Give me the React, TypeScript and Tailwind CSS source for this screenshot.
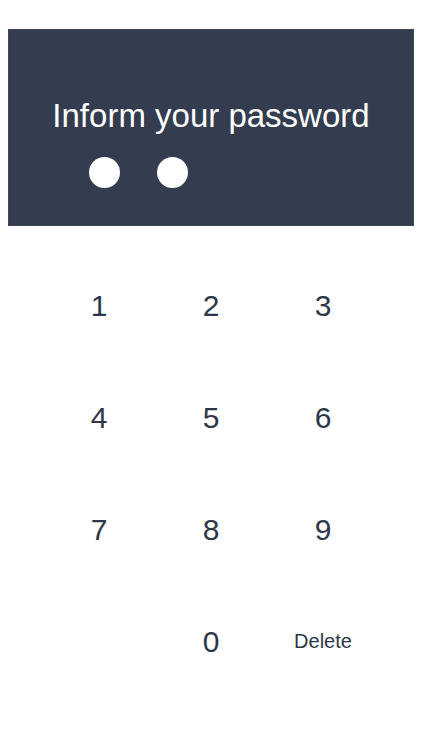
import { useState } from "react";

const keys = ["1", "2", "3", "4", "5", "6", "7", "8", "9", "", "0", "Delete"];

export default function App() {
  const [code, setCode] = useState("12");

  const press = (k: string) => {
    if (!k) return;
    if (k === "Delete") setCode((c) => c.slice(0, -1));
    else setCode((c) => (c.length < 4 ? c + k : c));
  };

  return (
    <div
      className="w-full min-h-[750px] bg-white pt-[29px]"
      style={{ fontFamily: '"Liberation Sans", Arial, sans-serif' }}
    >
      <div className="mx-2 h-[197px] bg-[#333d4f] pt-[68px] border border-[#3e4859]">
        <div className="text-center text-white text-[33px] leading-[36px]">
          Inform your password
        </div>
        <div className="flex gap-[37px] pl-[80px] mt-[23px] h-[31px]">
          {code.split("").map((_, i) => (
            <div key={i} className="w-[31px] h-[31px] rounded-full bg-white" />
          ))}
        </div>
      </div>

      <div className="w-[336px] mx-auto mt-[23px] grid grid-cols-3">
        {keys.map((k, i) => (
          <button
            key={i}
            onClick={() => press(k)}
            className={`h-[112px] flex items-center justify-center text-[#2d3748] ${
              k === "Delete" ? "text-[20px]" : "text-[30px]"
            }`}
          >
            {k}
          </button>
        ))}
      </div>
    </div>
  );
}
